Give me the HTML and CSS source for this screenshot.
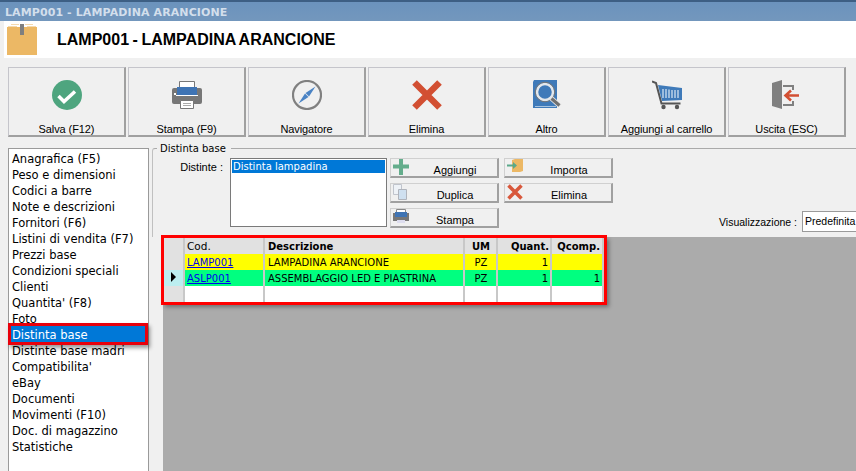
FILE: index.html
```html
<!DOCTYPE html>
<html lang="it">
<head>
<meta charset="utf-8">
<title>LAMP001 - LAMPADINA ARANCIONE</title>
<link rel="stylesheet" href="styles.css">
</head>
<body>
<div class="window">
  <div class="titlebar">LAMP001 - LAMPADINA ARANCIONE</div>
  <header class="header">
    <svg class="box-icon" width="30" height="31" viewBox="0 0 30 31"><path fill="#ecb865" d="M0 3h30v28H0z"/><path fill="#f4d9ae" d="M4 0h8v1H4zM18 0h8v1h-8zM1 2h9v1H1zM20 2h9v1h-9z"/><path fill="#7f7f7f" d="M13 0h4v11h-4z"/></svg>
    <h1 class="heading">LAMP001 - LAMPADINA ARANCIONE</h1>
  </header>
  <nav class="toolbar">
    <button class="tool"><svg class="tool-icon" viewBox="0 0 30 30"><circle cx="15" cy="15" r="15" fill="#4ea57f"/><path d="M6.500 16l5.500 5.500 11-10" fill="none" stroke="#fff" stroke-width="3.500"/></svg><span>Salva (F12)</span></button>
    <button class="tool"><svg class="tool-icon" viewBox="0 0 30 30"><path fill="#fff" stroke="#777" d="M7.500 1.500h15v7h-15z"/><path fill="#777" d="M2 8h26q2 0 2 2v12q0 2-2 2H2q-2 0-2-2V10q0-2 2-2z"/><path fill="#fff" d="M4 15h22v1H4zM2 13h2v2H2z"/><path fill="#3f74b4" d="M5 7h20v8H5z"/><path fill="#fff" stroke="#777" d="M8.500 20.500h13v8h-13z"/><path stroke="#aaa" d="M11 23.500h8M11 25.500h8"/></svg><span>Stampa (F9)</span></button>
    <button class="tool"><svg class="tool-icon" viewBox="0 0 30 30"><circle cx="15" cy="15" r="14" fill="none" stroke="#808080" stroke-width="2.200"/><path fill="#4a83c4" d="M23.500 6.500l-6.500 10-3.500-3.500z"/><path fill="#4a83c4" d="M6.500 23.500l6.500-10 3.500 3.500z"/></svg><span>Navigatore</span></button>
    <button class="tool"><svg class="tool-icon" viewBox="0 0 30 30"><path d="M2.500 2.500l25 25M27.500 2.500l-25 25" stroke="#d24f32" stroke-width="6.500" fill="none"/></svg><span>Elimina</span></button>
    <button class="tool"><svg class="tool-icon" viewBox="0 0 30 30"><path fill="#3f7ab9" d="M2 0h23v28H1V2z"/><path fill="#a8c4e0" d="M3 26h21v1H3z"/><circle cx="13" cy="12" r="8" fill="#3f7ab9" stroke="#e4e8ec" stroke-width="2.500"/><circle cx="13" cy="12" r="9.800" fill="none" stroke="#777" stroke-width="1"/><path d="M19 18l9 8" stroke="#e8e8e8" stroke-width="5"/><path d="M19.500 18.500l8 7" stroke="#707070" stroke-width="3"/></svg><span>Altro</span></button>
    <button class="tool"><svg class="tool-icon" viewBox="0 0 30 30"><path d="M0 1.500l4 1.500 5.500 20.500h19" fill="none" stroke="#555" stroke-width="2"/><path fill="#3f7ab9" d="M6 5l24 3v12l-20 1z"/><path stroke="#cfe0f0" stroke-width="1.300" d="M11 9v9M14 9v9M17 9.500v8.500M20 10v8M23 10v8M26 10v8"/><circle cx="11.500" cy="27" r="2.200" fill="#555"/><circle cx="25" cy="27" r="2.200" fill="#555"/></svg><span>Aggiungi al carrello</span></button>
    <button class="tool"><svg class="tool-icon" viewBox="0 0 30 30"><path fill="#808080" d="M0 3l10-3v29L0 26z"/><path fill="none" stroke="#808080" stroke-width="2" d="M11 6h10v4M21 21v4H11"/><path fill="none" stroke="#d24f32" stroke-width="2.600" d="M27 15.500H14M19 10.500l-5.500 5 5.500 5"/></svg><span>Uscita (ESC)</span></button>
  </nav>
  <div class="workspace">
    <ul class="sidelist">
      <li>Anagrafica (F5)</li>
      <li>Peso e dimensioni</li>
      <li>Codici a barre</li>
      <li>Note e descrizioni</li>
      <li>Fornitori (F6)</li>
      <li>Listini di vendita (F7)</li>
      <li>Prezzi base</li>
      <li>Condizioni speciali</li>
      <li>Clienti</li>
      <li>Quantita' (F8)</li>
      <li>Foto</li>
      <li class="selected">Distinta base</li>
      <li>Distinte base madri</li>
      <li>Compatibilita'</li>
      <li>eBay</li>
      <li>Documenti</li>
      <li>Movimenti (F10)</li>
      <li>Doc. di magazzino</li>
      <li>Statistiche</li>
    </ul>
    <section class="panel">
      <div class="legend"><span>Distinta base</span></div>
      <div class="controls">
        <label class="distinte-label">Distinte :</label>
        <div class="listbox"><div class="listbox-item">Distinta lampadina</div></div>
        <div class="btn-col">
          <button class="btn"><svg class="btn-icon" viewBox="0 0 16 16"><path d="M8 0v16M0 7.500h16" stroke="#64ad8c" stroke-width="4"/></svg><span>Aggiungi</span></button>
          <button class="btn"><svg class="btn-icon" viewBox="0 0 16 16"><path fill="#eef2f7" stroke="#c0c4cc" d="M.5.500h8v10h-8z"/><path fill="#cfe0f0" stroke="#b0b4bc" d="M5.500 5.500h8v10h-8z"/></svg><span>Duplica</span></button>
          <button class="btn"><svg class="btn-icon" viewBox="0 0 16 16"><path fill="#fff" stroke="#888" d="M3.500.500h9v4h-9z"/><path fill="#777" d="M0 4h16v8H0z"/><path fill="#3f74b4" d="M2 3h12v5H2z"/><path fill="#dde" d="M4 11h8v3H4z"/></svg><span>Stampa</span></button>
        </div>
        <div class="btn-col">
          <button class="btn"><svg class="btn-icon" viewBox="0 0 16 16"><path fill="#ecb865" d="M5 1l3-1h8v12l-3 1H5z"/><path stroke="#5aa98a" stroke-width="2" d="M0 6.500h8"/><path fill="#5aa98a" d="M6 3l4 3.500-4 3.500z"/></svg><span>Importa</span></button>
          <button class="btn"><svg class="btn-icon" viewBox="0 0 16 16"><path d="M1.500 1.500l13 13M14.500 1.500l-13 13" stroke="#d8583c" stroke-width="3.500"/></svg><span>Elimina</span></button>
        </div>
        <div class="view-select">
          <label>Visualizzazione :</label>
          <div class="select">Predefinita</div>
        </div>
      </div>
      <div class="grid-area">
        <table class="grid">
          <thead>
            <tr><th class="gutter"></th><th class="col-cod">Cod.</th><th class="col-desc">Descrizione</th><th class="col-um">UM</th><th class="col-quant">Quant.</th><th class="col-comp">Qcomp.</th></tr>
          </thead>
          <tbody>
            <tr class="row-yellow"><td class="gutter"></td><td><a href="#">LAMP001</a></td><td>LAMPADINA ARANCIONE</td><td class="center">PZ</td><td class="right">1</td><td class="right"></td></tr>
            <tr class="row-green"><td class="gutter current"><svg width="7" height="10" viewBox="0 0 7 10"><path d="M1 0l5 5-5 5z"/></svg></td><td><a href="#">ASLP001</a></td><td>ASSEMBLAGGIO LED E PIASTRINA</td><td class="center">PZ</td><td class="right">1</td><td class="right">1</td></tr>
            <tr><td class="gutter"></td><td></td><td></td><td></td><td></td><td></td></tr>
          </tbody>
        </table>
      </div>
    </section>
  </div>
</div>
</body>
</html>
```
FILE: styles.css
```css
* { box-sizing: border-box; }
html, body { margin: 0; height: 100%; overflow: hidden; }
body { font-family: "DejaVu Sans", sans-serif; font-size: 11.5px; color: #000; background: #f0f0f0; }
.window { width: 856px; height: 471px; display: flex; flex-direction: column; overflow: hidden; }
.titlebar { height: 21px; flex: none; padding: 4px 0 0 5px; font-size: 11px; letter-spacing: .1px; font-weight: bold; line-height: 14px; color: #d3dfec; border-top: 2px solid #3d5f84; background: linear-gradient(#6b93bd, #7397bd); white-space: nowrap; }
.header { height: 37px; flex: none; margin-left: 4px; background: #fff; display: flex; align-items: center; padding-left: 3px; }
.box-icon { flex: none; }
.heading { margin: 0 0 0 20px; font-family: "Liberation Sans", sans-serif; font-size: 16px; font-weight: bold; word-spacing: -.9px; white-space: nowrap; }
.toolbar { flex: none; height: 90px; padding: 9px 0 0 8px; display: flex; gap: 2px; }
.tool { width: 118px; height: 70px; flex: none; padding: 12px 0 0; margin: 0; background: #f0f0f0; border: 1px solid #c5c5cb; border-right: 2px solid #a0a0a0; border-bottom: 2px solid #a0a0a0; font-family: "Liberation Sans", sans-serif; font-size: 11px; letter-spacing: -.1px; color: #000; display: flex; flex-direction: column; align-items: center; }
.tool-icon { width: 30px; height: 30px; flex: none; }
.tool span { margin-top: 12px; line-height: 14px; white-space: nowrap; }
.workspace { flex: 1; min-height: 0; display: flex; padding-left: 8px; }
.sidelist { width: 141px; flex: none; margin: 0 3px 0 0; padding: 2px 1px; list-style: none; background: #fff; border: 1px solid #9a9a9a; border-bottom: none; height: 340px; }
.sidelist li { height: 16px; line-height: 16px; padding-left: 2px; white-space: nowrap; }
.sidelist .selected { height: 18px; margin: -2px 1px 0 0; padding-top: 2px; background: #0078d7; color: #fff; outline: 3px solid #e8000b; outline-offset: -1px; box-shadow: 2px 3px 4px 2px rgba(0,0,0,.4); position: relative; }
.panel { flex: 1; min-width: 0; display: flex; flex-direction: column; }
.legend { height: 10px; flex: none; font-size: 10px; border-left: 1px solid #c0c0c0; border-top: 1px solid #aaa; border-top-left-radius: 3px; position: relative; }
.legend span { position: absolute; left: 4px; top: -7px; padding: 0 5px 0 3px; background: #f0f0f0; line-height: 14px; white-space: nowrap; }
.controls { height: 79px; flex: none; display: flex; align-items: flex-start; padding-left: 11px; border-left: 1px solid #c0c0c0; font-family: "Liberation Sans", sans-serif; font-size: 11px; }
.distinte-label { width: 66px; text-align: right; padding: 2px 7px 0 0; flex: none; line-height: 14px; }
.listbox { width: 157px; height: 69px; flex: none; background: #fff; border: 1px solid #7a7a7a; padding: 1px; font-family: "DejaVu Sans", sans-serif; font-size: 10px; }
.listbox-item { background: #0078d7; color: #fff; height: 13px; line-height: 13px; padding-left: 1px; white-space: nowrap; }
.btn-col { width: 109px; flex: none; margin-left: 3px; display: flex; flex-direction: column; gap: 5px; }
.btn-col + .btn-col { margin-left: 5px; }
.btn { height: 20px; flex: none; width: 109px; margin: 0; padding: 4px 0 0; position: relative; background: #f0f0f0; border: 1px solid #d0d0d0; border-right: 2px solid #a0a0a0; border-bottom: 2px solid #a0a0a0; font: inherit; color: #000; text-align: center; line-height: 14px; }
.btn span { padding-left: 22px; }
.btn-icon { position: absolute; left: 2px; top: 0; width: 16px; height: 16px; }
.view-select { margin: 53px 0 0 106px; display: flex; gap: 5px; white-space: nowrap; align-items: center; flex: none; font-size: 10.5px; }
.select { width: 80px; height: 21px; background: #fff; border: 1px solid #9a9a9a; padding-left: 2px; line-height: 19px; }
.grid-area { flex: 1; min-height: 0; margin-left: 11px; background: #ababab; padding: 1px 0 0 1px; }
.grid { border-collapse: collapse; table-layout: fixed; width: 439px; outline: 3px solid #f00; box-shadow: 3px 3px 4px 2px rgba(0,0,0,.35); background: #fff; font-size: 10px; }
.grid th, .grid td { height: 16px; padding: 1px 2px 0 3px; border: solid #c8c8c8; border-width: 0 2px 0 0; font-weight: normal; line-height: 15px; white-space: nowrap; overflow: hidden; text-align: left; }
.grid th { background: #e1e1e1; height: 15px; font-weight: bold; }
.grid th.col-cod { font-weight: normal; font-size: 10.5px; padding-left: 2px; }
.gutter { width: 20px; }
.grid td.gutter { background: #e1e1e1; }
.grid td.gutter.current { background: #bceef0; padding: 0 0 0 6px; }
.col-cod { width: 80px; }
.col-desc { width: 200px; }
.col-um { width: 33px; }
.col-quant { width: 54px; }
.col-comp { width: 52px; }
.grid th.col-um, .center { text-align: center; }
.grid th.col-quant, .grid th.col-comp, .grid td.right { text-align: right; }
.grid th.col-quant { padding-right: 1px; }
.grid td.center { text-align: center; }
.row-yellow td { background: #ffff00; }
.row-green td { background: #00ff80; }
.grid a { color: #0000ee; margin-left: -1px; }
```
